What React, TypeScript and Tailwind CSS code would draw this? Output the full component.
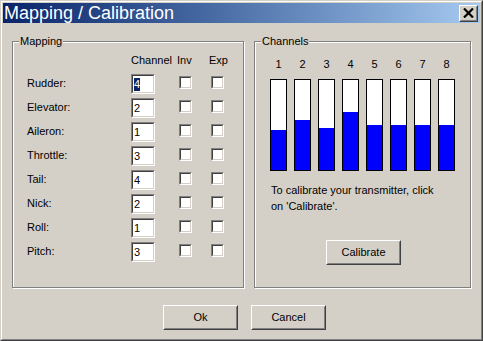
import React from "react";

const sunken =
  "border border-t-[#808080] border-l-[#808080] border-b-white border-r-white";
const sunkenInner =
  "border border-t-[#404040] border-l-[#404040] border-b-[#d4d0c8] border-r-[#d4d0c8]";

function ChannelInput({ value, selected }: { value: string; selected?: boolean }) {
  return (
    <div className={`w-[24px] h-[20px] ${sunken}`}>
      <div className={`w-full h-full bg-white ${sunkenInner} flex items-center pl-[1px]`}>
        {selected ? (
          <span className="bg-[#0a246a] text-white leading-[13px] px-[0px]">{value}</span>
        ) : (
          <span className="leading-[13px]">{value}</span>
        )}
      </div>
    </div>
  );
}

function CheckBox() {
  return (
    <div className={`w-[13px] h-[13px] ${sunken}`}>
      <div className={`w-full h-full bg-white ${sunkenInner}`} />
    </div>
  );
}

function Button({ label, className = "" }: { label: string; className?: string }) {
  return (
    <div
      className={`w-[75px] h-[25px] border border-t-white border-l-white border-b-[#404040] border-r-[#404040] ${className}`}
    >
      <div className="w-full h-full border border-t-[#d4d0c8] border-l-[#d4d0c8] border-b-[#808080] border-r-[#808080] flex items-center justify-center">
        {label}
      </div>
    </div>
  );
}

function GroupBox({
  title,
  className = "",
  children,
}: {
  title: string;
  className?: string;
  children: React.ReactNode;
}) {
  return (
    <div
      className={`relative border border-[#808080] shadow-[inset_1px_1px_0_#fff,1px_1px_0_#fff] ${className}`}
    >
      <div className="absolute left-[6px] top-[-7px] bg-[#d4d0c8] px-[1px] leading-[13px]">
        {title}
      </div>
      {children}
    </div>
  );
}

const rows: [string, string][] = [
  ["Rudder:", "4"],
  ["Elevator:", "2"],
  ["Aileron:", "1"],
  ["Throttle:", "3"],
  ["Tail:", "4"],
  ["Nick:", "2"],
  ["Roll:", "1"],
  ["Pitch:", "3"],
];

const fills = [40, 50, 42, 58, 45, 45, 45, 45];

export default function App() {
  return (
    <div
      className="w-[483px] h-[341px] bg-[#d4d0c8] text-black text-[11px] border border-t-[#d4d0c8] border-l-[#d4d0c8] border-b-[#404040] border-r-[#404040]"
      style={{ fontFamily: '"Liberation Sans", Arial, sans-serif' }}
    >
      <div className="w-full h-full border border-t-white border-l-white border-b-[#808080] border-r-[#808080] p-[1px] flex flex-col">
        {/* Title bar */}
        <div className="h-[20px] flex items-center justify-between bg-gradient-to-r from-[#0a246a] to-[#a6caf0] pl-[1px] pr-[2px]">
          <span className="text-white text-[18px] leading-[20px]">Mapping / Calibration</span>
          <div className="w-[19px] h-[17px] border border-t-white border-l-white border-b-[#404040] border-r-[#404040] bg-[#d4d0c8]">
            <div className="w-full h-full border border-t-[#d4d0c8] border-l-[#d4d0c8] border-b-[#808080] border-r-[#808080] flex items-center justify-center">
              <svg width="11" height="10" viewBox="0 0 11 10">
                <path d="M1 0.5 L10 9.5 M10 0.5 L1 9.5" stroke="black" strokeWidth="2.2" />
              </svg>
            </div>
          </div>
        </div>

        {/* Content */}
        <div className="flex pl-[9px] pt-[18px] gap-[10px]">
          <GroupBox title="Mapping" className="w-[232px] h-[247px]">
            <div className="pt-[12px]">
              <div className="flex pl-[118px] leading-[13px]">
                <span className="w-[46px]">Channel</span>
                <span className="w-[32px]">Inv</span>
                <span>Exp</span>
              </div>
              <div className="flex flex-col gap-[4px] mt-[7px]">
                {rows.map(([label, v], i) => (
                  <div key={label} className="flex items-center h-[20px] pl-[14px]">
                    <span className="w-[104px] leading-[13px] -mt-[2px]">{label}</span>
                    <ChannelInput value={v} selected={i === 0} />
                    <div className="ml-[24px] self-start mt-[2px]">
                      <CheckBox />
                    </div>
                    <div className="ml-[19px] self-start mt-[2px]">
                      <CheckBox />
                    </div>
                  </div>
                ))}
              </div>
            </div>
          </GroupBox>

          <GroupBox title="Channels" className="w-[217px] h-[247px]">
            <div className="pt-[16px] pl-[15px]">
              <div className="flex gap-[7px] leading-[13px]">
                {fills.map((_, i) => (
                  <span key={i} className="w-[17px] text-center">
                    {i + 1}
                  </span>
                ))}
              </div>
              <div className="flex gap-[7px] mt-[8px]">
                {fills.map((f, i) => (
                  <div
                    key={i}
                    className="w-[17px] h-[92px] border border-black bg-white flex flex-col justify-end"
                  >
                    <div className="bg-[#0000ff] w-full" style={{ height: f }} />
                  </div>
                ))}
              </div>
              <div className="mt-[11px] pl-[1px] leading-[16px]">
                To calibrate your transmitter, click
                <br />
                on 'Calibrate'.
              </div>
              <Button label="Calibrate" className="ml-[56px] mt-[26px]" />
            </div>
          </GroupBox>
        </div>

        {/* Bottom buttons */}
        <div className="flex gap-[13px] pl-[160px] mt-[17px]">
          <Button label="Ok" />
          <Button label="Cancel" />
        </div>
      </div>
    </div>
  );
}
